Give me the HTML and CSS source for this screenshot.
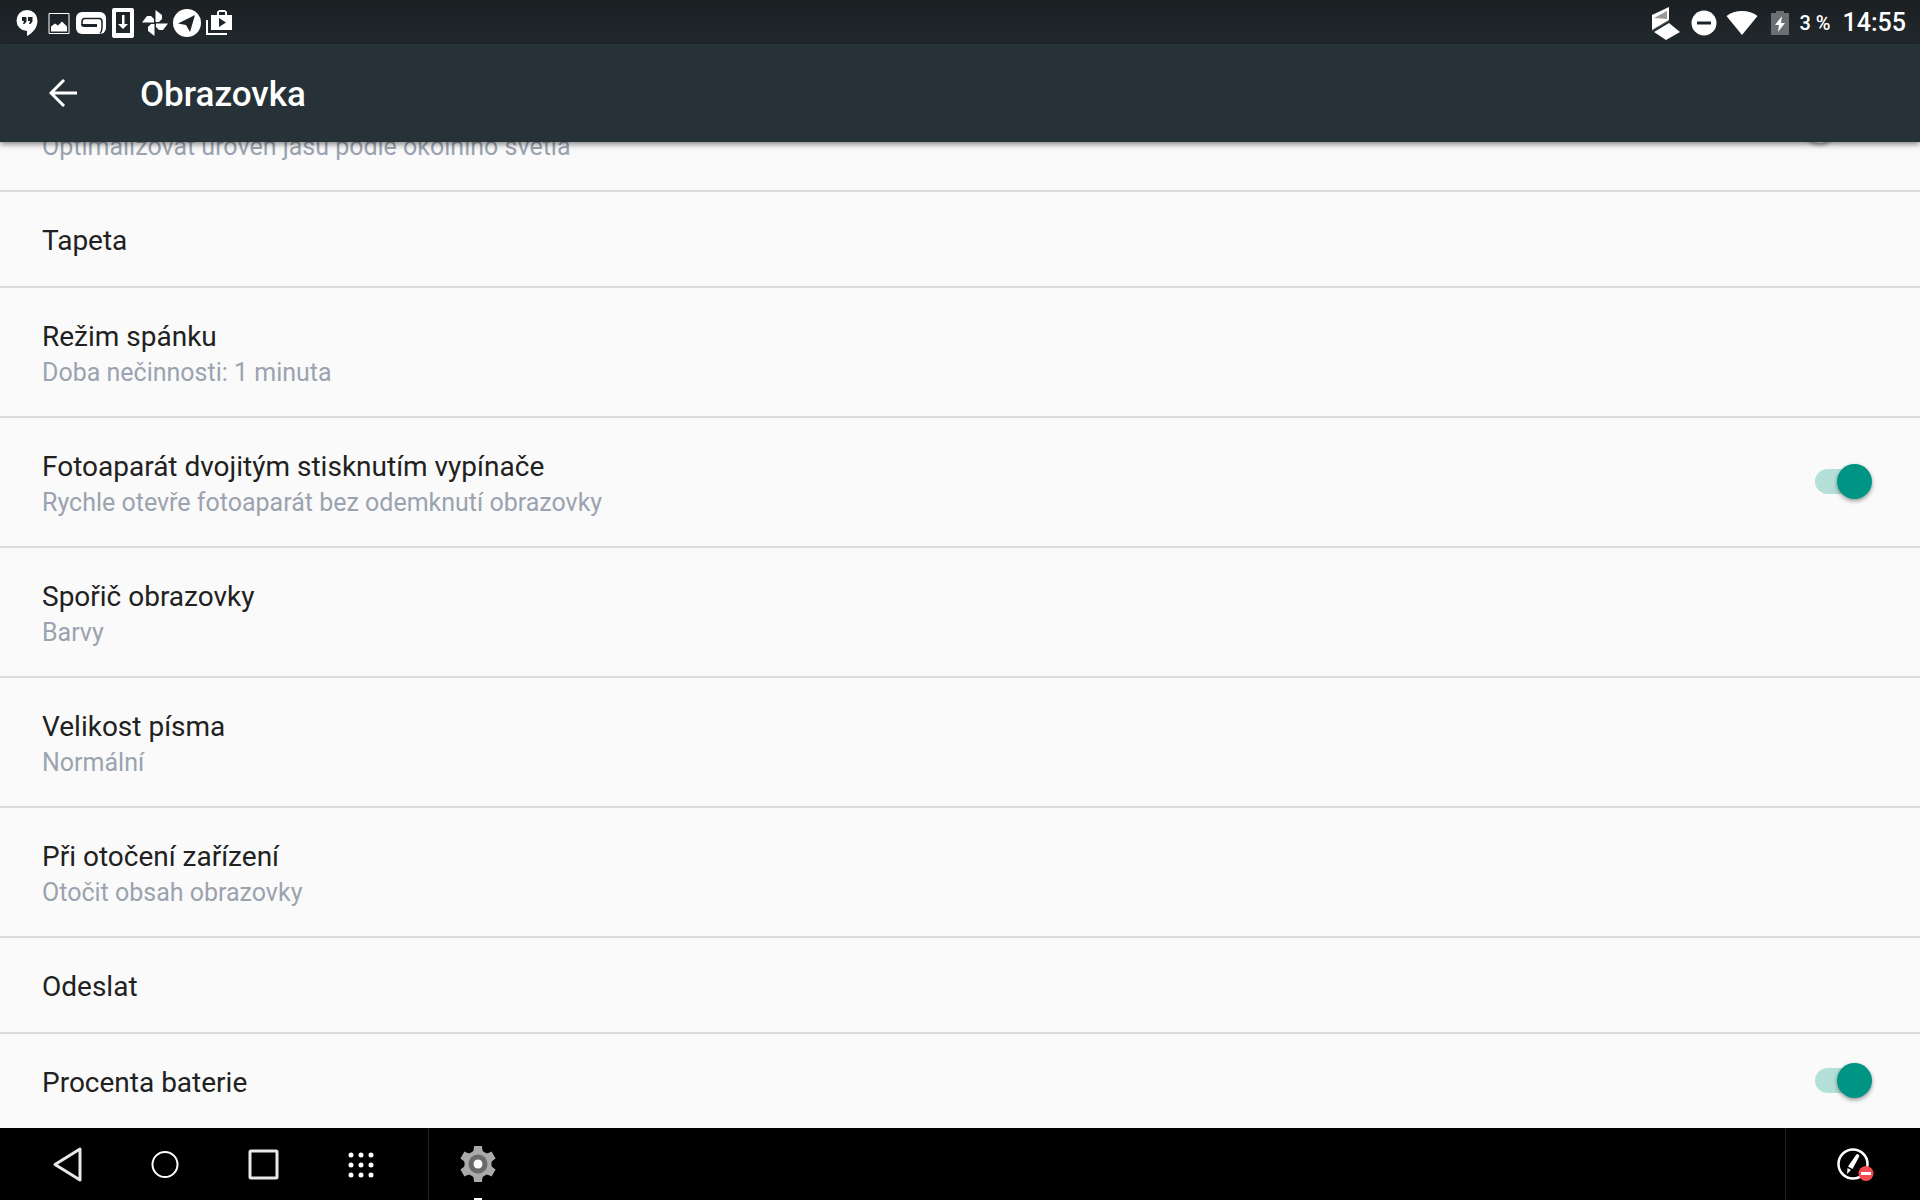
FILE: index.html
```
<!DOCTYPE html>
<html lang="cs">
<head>
  <meta charset="UTF-8">
  <meta name="viewport" content="width=device-width, initial-scale=1">
  <title>Obrazovka</title>
  <link rel="stylesheet" href="styles.css">
</head>
<body>
  <!-- Status bar -->
  <div class="status-bar">
    <div class="notifications">
      <span class="icon"><svg width="22" height="28" viewBox="0 0 22 28"><path fill="#fff" d="M11 1a10.500 10.500 0 0 0 0 21v5c6-3 10.500-8.500 10.500-15.500A10.500 10.500 0 0 0 11 1z"/><path fill="#1d2326" d="M6 8h4.500v4.500L8.500 15H7l1-3H6zM12 8h4.500v4.500L14.500 15H13l1-3h-2z"/></svg></span>
      <span class="icon"><svg width="22" height="28" viewBox="0 0 22 28"><path fill="none" stroke="#fff" d="M1 4.500h20v20H1z"/><path fill="#fff" d="M3 22.500v-5l4-3 3 2 4-4 5 5v5z"/></svg></span>
      <span class="icon"><svg width="30" height="28" viewBox="0 0 30 28"><rect y="3" width="30" height="22" rx="6" fill="#fff"/><path fill="none" stroke="#1d2326" stroke-width="1.500" d="M6 16v-3.500q0-3 3-3h14q3 0 3 3v6q0 4-2 6"/><path fill="#1d2326" d="M5 15h16v3H8q-3 0-3-3z"/></svg></span>
      <span class="icon"><svg width="22" height="32" viewBox="0 0 22 32"><path fill="#fff" fill-rule="evenodd" d="M2 1h18q2 0 2 2v26q0 2-2 2H2q-2 0-2-2V3q0-2 2-2zm2 4v21h14V5z"/><path fill="#fff" d="M10 8h2.500v9H16l-5 5-5-5h4z"/></svg></span>
      <span class="icon">
        <svg width="26" height="28" viewBox="0 0 26 28" fill="#fff">
          <path d="M13.500 1v12h3.500l3-3V6z"/>
          <path d="M13.500 1v12h3.500l3-3V6z" transform="rotate(90 13 14)"/>
          <path d="M13.500 1v12h3.500l3-3V6z" transform="rotate(180 13 14)"/>
          <path d="M13.500 1v12h3.500l3-3V6z" transform="rotate(270 13 14)"/>
        </svg>
      </span>
      <span class="icon"><svg width="28" height="28" viewBox="0 0 28 28"><circle cx="14" cy="14" r="14" fill="#fff"/><path fill="#1d2326" d="M5 14.500 22 6l-5 17-4-7z"/></svg></span>
      <span class="icon"><svg width="26" height="28" viewBox="0 0 26 28"><path fill="#fff" fill-rule="evenodd" d="M5 6h6V3l2-2h6l2 2v3h5v15H5zm8 0h6V3h-6zm0 3v9l7-4.500z"/><path fill="none" stroke="#fff" stroke-width="2" d="M1 11v14h20"/></svg></span>
    </div>
    <div class="system-icons">
      <span class="icon"><svg width="28" height="34" viewBox="0 0 28 34"><path fill="#fff" d="M0 9 17 1v13L0 24zM2 26l15-9 11 9-14 8z"/><path fill="#999" d="m2 12 13-7v8z"/><path stroke="#777" d="m0 24.500 17-10"/></svg></span>
      <span class="icon"><svg width="26" height="26" viewBox="0 0 26 26"><circle cx="13" cy="13" r="12.500" fill="#fff"/><path fill="#1d2326" d="M6 11.500h14v3H6z"/></svg></span>
      <span class="icon"><svg width="32" height="26" viewBox="0 0 32 26"><path fill="#fff" d="M16 25 .5 6Q7 1 16 1t15.500 5z"/></svg></span>
      <span class="icon"><svg width="18" height="26" viewBox="0 0 18 26"><path fill="#6b6f71" d="M5 1h8v2h5v22H0V3h5z"/><path fill="#fff" d="M11 6 4 15h4l-1 7 7-9h-4z"/></svg></span>
      <span class="battery">3 %</span>
      <span class="clock">14:55</span>
    </div>
  </div>

  <!-- App bar -->
  <header class="app-bar">
    <button class="back" aria-label="Zpět">
      <svg width="28" height="28" viewBox="0 0 28 28"><path fill="none" stroke="#fff" stroke-width="3" d="M28 14H2M15 1 2 14l13 13"/></svg>
    </button>
    <h1>Obrazovka</h1>
  </header>

  <!-- Settings list -->
  <main class="content">
    <div class="settings">
      <label class="row">
        <span class="text"><span class="title"></span><span class="summary">Optimalizovat úroveň jasu podle okolního světla</span></span>
        <input class="switch" type="checkbox">
      </label>
      <button class="row short"><span class="text"><span class="title">Tapeta</span></span></button>
      <button class="row">
        <span class="text"><span class="title">Režim spánku</span><span class="summary">Doba nečinnosti: 1 minuta</span></span>
      </button>
      <label class="row">
        <span class="text"><span class="title">Fotoaparát dvojitým stisknutím vypínače</span><span class="summary">Rychle otevře fotoaparát bez odemknutí obrazovky</span></span>
        <input class="switch" type="checkbox" checked>
      </label>
      <button class="row">
        <span class="text"><span class="title">Spořič obrazovky</span><span class="summary">Barvy</span></span>
      </button>
      <button class="row">
        <span class="text"><span class="title">Velikost písma</span><span class="summary">Normální</span></span>
      </button>
      <button class="row">
        <span class="text"><span class="title">Při otočení zařízení</span><span class="summary">Otočit obsah obrazovky</span></span>
      </button>
      <button class="row short"><span class="text"><span class="title">Odeslat</span></span></button>
      <label class="row short">
        <span class="text"><span class="title">Procenta baterie</span></span>
        <input class="switch" type="checkbox" checked>
      </label>
    </div>
  </main>

  <!-- Navigation bar -->
  <nav class="nav-bar">
    <div class="nav-keys">
      <button aria-label="Zpět"><svg width="36" height="36" viewBox="0 0 36 36"><path fill="none" stroke="#e8e8e8" stroke-width="3" stroke-linejoin="round" d="M31 3v31L6 18.500z"/></svg></button>
      <button aria-label="Domů"><svg width="36" height="36" viewBox="0 0 36 36"><circle cx="18" cy="18.500" r="12.500" fill="none" stroke="#fff" stroke-width="2"/></svg></button>
      <button aria-label="Přehled"><svg width="36" height="36" viewBox="0 0 36 36"><rect x="5" y="5" width="27" height="27" rx="1" fill="none" stroke="#e8e8e8" stroke-width="3"/></svg></button>
      <button aria-label="Aplikace"><svg width="36" height="36" viewBox="0 0 36 36"><path fill="none" stroke="#fff" stroke-width="5" stroke-linecap="round" d="M8 9h0M18 9h0M28 9h0M8 19h0M18 19h0M28 19h0M8 29h0M18 29h0M28 29h0"/></svg></button>
    </div>
    <div class="running">
      <button class="running-app" aria-label="Nastavení">
        <svg width="36" height="36" viewBox="0 0 36 36">
          <g fill="#aaa">
            <circle cx="18" cy="18" r="13.500"/>
            <path d="M12 7q2-2 2-7h8q0 5 2 7v22q-2 2-2 7h-8q0-5-2-7z"/>
            <path d="M12 7q2-2 2-7h8q0 5 2 7v22q-2 2-2 7h-8q0-5-2-7z" transform="rotate(60 18 18)"/>
            <path d="M12 7q2-2 2-7h8q0 5 2 7v22q-2 2-2 7h-8q0-5-2-7z" transform="rotate(120 18 18)"/>
          </g>
          <circle cx="18" cy="18" r="9.500" fill="#6a6a6a"/>
          <circle cx="18" cy="18" r="4.500" fill="#fff"/>
        </svg>
      </button>
    </div>
    <div class="tray">
      <button aria-label="Pero">
        <svg width="38" height="36" viewBox="0 0 38 36"><circle cx="17" cy="18" r="14.500" fill="none" stroke="#fff" stroke-width="2.500"/><path fill="#fff" d="M20 9q1-1.500 2.500-.5t.500 2.500l-6.500 12-4.500-2.500zM11.500 22l3.500 2-4 4z"/><circle cx="30" cy="27.500" r="7.500" fill="#f44a50"/><path fill="#fff" d="M25 26h10v3H25z"/></svg>
      </button>
    </div>
  </nav>
</body>
</html>
```
FILE: styles.css
```
* { margin: 0; padding: 0; box-sizing: border-box; }

body {
  display: flex;
  flex-direction: column;
  height: 100vh;
  overflow: hidden;
  background: #fafafa;
  color: #212121;
  font-family: Roboto, sans-serif;
}
button {
  border: none;
  background: none;
  color: inherit;
  font: inherit;
  cursor: pointer;
}
svg { display: block; }

/* Status bar */
.status-bar {
  display: flex;
  justify-content: space-between;
  align-items: center;
  flex: none;
  height: 44px;
  padding: 1px 14px 0 11px;
  background: linear-gradient(#1a1f22, #22292d);
  color: #fff;
}
.notifications,
.system-icons {
  display: flex;
  align-items: center;
}
.icon {
  display: flex;
  justify-content: center;
  width: 32px;
}
.system-icons .icon { width: 38px; }
.battery {
  margin-right: 12px;
  font-size: 20px;
  font-weight: 500;
}
.clock {
  font-size: 25px;
  font-weight: 500;
}

/* App bar */
.app-bar {
  display: flex;
  align-items: center;
  flex: none;
  gap: 63px;
  height: 98px;
  padding: 0 49px;
  background: #263238;
  color: #fff;
  box-shadow: 0 2px 6px rgba(0, 0, 0, 0.5);
  z-index: 1;
}
.app-bar h1 {
  padding-top: 2px;
  font-size: 35px;
  font-weight: 500;
}

/* Settings list */
.content {
  flex: 1;
  min-height: 0;
  overflow: hidden;
}
.settings {
  display: flex;
  flex-direction: column;
  margin-top: -80px; /* scrolled position */
}
.row {
  display: flex;
  justify-content: space-between;
  align-items: center;
  flex: none;
  min-height: 130px;
  padding: 0 48px 0 42px;
  border-bottom: 2px solid #dcdcdc;
  text-align: left;
  cursor: pointer;
}
.row.short { min-height: 96px; }
.text {
  display: flex;
  flex-direction: column;
  padding-top: 4px;
}
.title {
  min-height: 38px;
  font-size: 28px;
  line-height: 38px;
}
.summary {
  color: #9aa3af;
  font-size: 25px;
  line-height: 34px;
}

/* Switch */
.switch {
  display: grid;
  align-items: center;
  appearance: none;
  width: 70px;
  height: 35px;
  margin-bottom: 2px;
  cursor: pointer;
}
.switch::before,
.switch::after {
  content: "";
  grid-area: 1 / 1;
}
.switch::before {
  height: 25px;
  margin: 0 13px;
  border-radius: 13px;
  background: #b9b9b9;
}
.switch::after {
  width: 35px;
  height: 35px;
  border-radius: 50%;
  background: #f1f1f1;
  box-shadow: 0 2px 4px rgba(0, 0, 0, 0.4);
}
.switch:checked::before { background: #b5e0da; }
.switch:checked::after {
  justify-self: end;
  background: #009485;
}

/* Navigation bar */
.nav-bar {
  display: flex;
  flex: none;
  height: 72px;
  background: #000;
}
.nav-keys {
  display: flex;
  align-items: center;
  gap: 62px;
  padding: 0 49px;
}
.running {
  display: flex;
  flex: 1;
  padding: 0 26px;
  border-left: 1px solid #222;
}
.running-app {
  display: flex;
  justify-content: center;
  align-items: center;
  width: 46px;
  position: relative;
}
/* mark of an open app */
.running-app::after {
  content: "";
  position: absolute;
  bottom: 0;
  width: 8px;
  height: 2px;
  background: #fff;
}
.tray {
  display: flex;
  align-items: center;
  padding: 0 46px 0 50px;
  border-left: 1px solid #222;
}
```
